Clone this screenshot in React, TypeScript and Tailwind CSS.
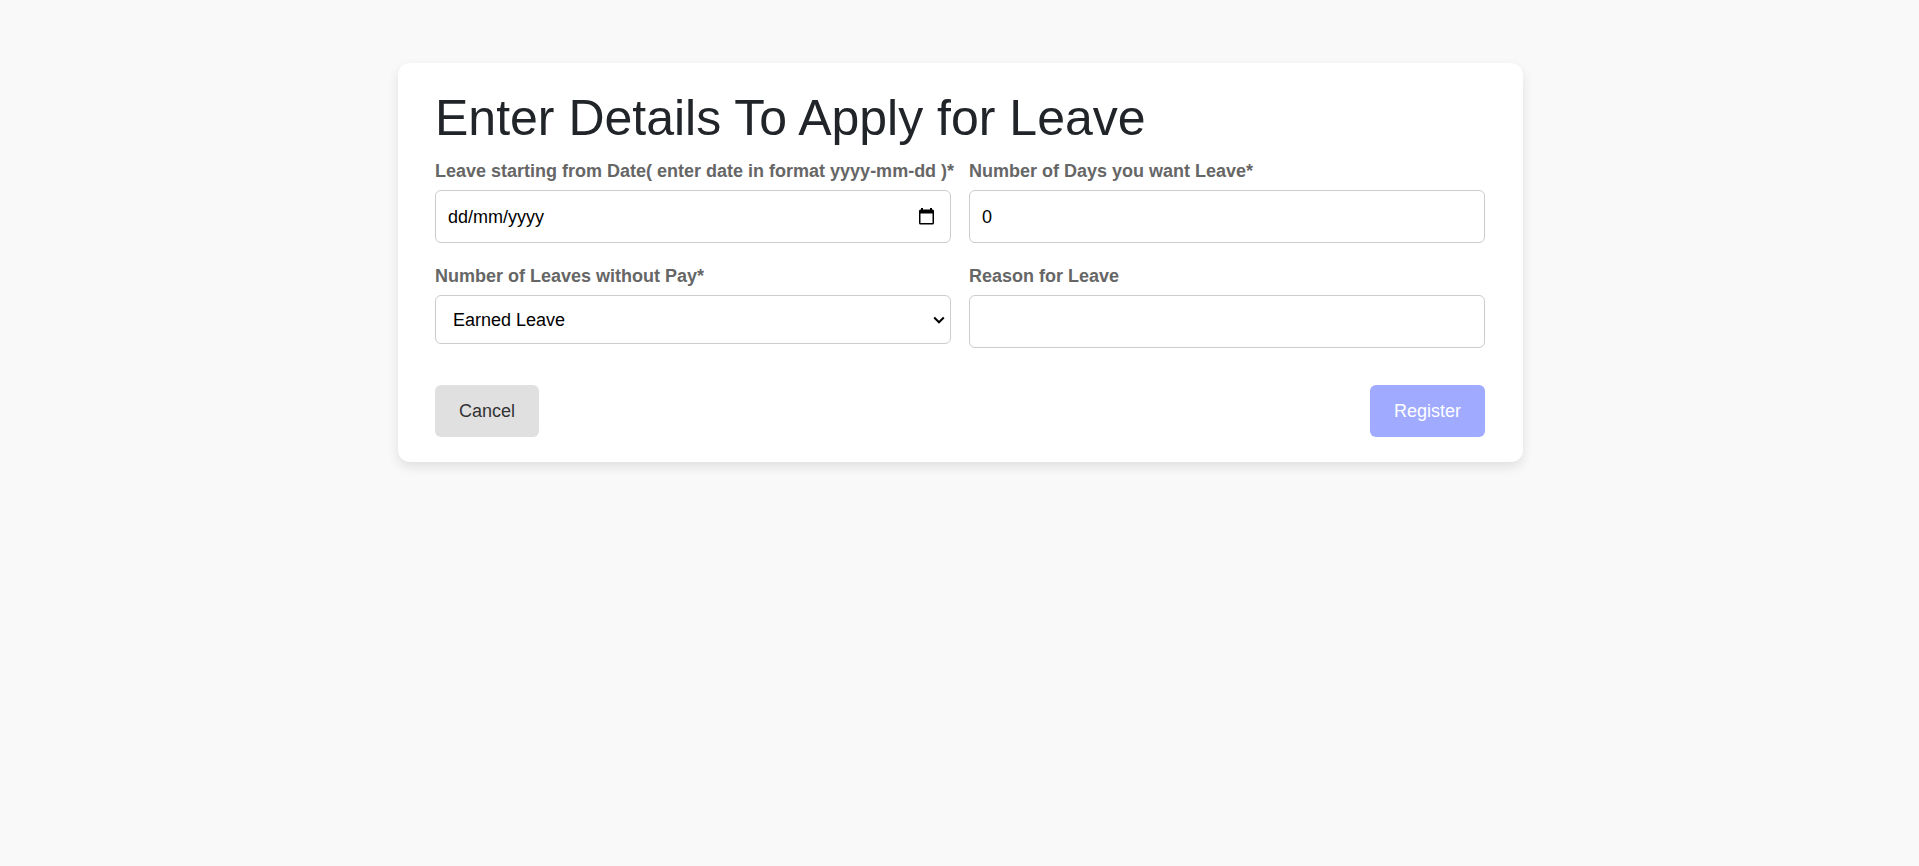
import { useState } from "react";
import type { ReactNode } from "react";

const control =
  "block w-full rounded-md border border-[#cccccc] bg-white text-lg leading-5 text-black outline-none focus:border-[#6b7cff]";

function Field({ id, label, children }: { id: string; label: string; children: ReactNode }) {
  return (
    <div className="flex min-w-0 flex-col gap-[5px]">
      <label
        htmlFor={id}
        className="text-lg font-bold leading-[27px] text-[#666666] lg:whitespace-nowrap"
      >
        {label}
      </label>
      {children}
    </div>
  );
}

function CalendarIcon() {
  return (
    <svg viewBox="0 0 15 17" className="h-[17px] w-[15px]" aria-hidden="true">
      <path
        fillRule="evenodd"
        fill="#000"
        d="M2 0h2v1.500h7V0h2v1.500h.5A1.500 1.500 0 0 1 15 3v12a1.500 1.500 0 0 1-1.500 1.500h-12A1.500 1.500 0 0 1 0 15V3a1.500 1.500 0 0 1 1.500-1.500H2zM1.500 5.500V15h12V5.500z"
      />
    </svg>
  );
}

export default function App() {
  const [date, setDate] = useState("");
  const [days, setDays] = useState("0");
  const [reason, setReason] = useState("");

  return (
    <main className="min-h-screen bg-[#f9f9f9] pl-[18px] pr-4 pt-[63px] font-['Liberation_Sans',Arial,sans-serif]">
      <form
        className="mx-auto max-w-[1125px] rounded-xl bg-white py-[25px] pl-[37px] pr-[38px] shadow-[0_5px_12px_rgba(0,0,0,0.1)]"
        onSubmit={(e) => e.preventDefault()}
      >
        <h1 className="mb-[10px] text-[50px] leading-[60px] text-[#212529]">
          Enter Details To Apply for Leave
        </h1>

        <div className="grid grid-cols-1 items-start gap-x-[18px] gap-y-5 md:grid-cols-2">
          <Field id="start" label="Leave starting from Date( enter date in format yyyy-mm-dd )*">
            <div className="relative">
              <input
                id="start"
                type="text"
                placeholder="dd/mm/yyyy"
                value={date}
                onChange={(e) => setDate(e.target.value)}
                className={`${control} h-[53px] pl-3 pr-10 pt-0.5 placeholder:text-black`}
              />
              <button
                type="button"
                aria-label="Open calendar"
                className="absolute inset-y-0 right-[17px] flex items-center"
              >
                <CalendarIcon />
              </button>
            </div>
          </Field>

          <Field id="days" label="Number of Days you want Leave*">
            <input
              id="days"
              type="text"
              inputMode="numeric"
              value={days}
              onChange={(e) => setDays(e.target.value)}
              className={`${control} h-[53px] px-3 pt-0.5`}
            />
          </Field>

          <Field id="type" label="Number of Leaves without Pay*">
            <div className="relative">
              <select id="type" className={`${control} h-[49px] appearance-none pl-[17px] pr-8`}>
                <option>Earned Leave</option>
              </select>
              <svg
                viewBox="0 0 12 8"
                className="pointer-events-none absolute inset-y-0 right-[6px] my-auto h-2 w-3"
                fill="none"
                stroke="#000"
                strokeWidth="2"
                aria-hidden="true"
              >
                <path d="M1.200 1.500 6 6.300 10.800 1.500" />
              </svg>
            </div>
          </Field>

          <Field id="reason" label="Reason for Leave">
            <input
              id="reason"
              type="text"
              value={reason}
              onChange={(e) => setReason(e.target.value)}
              className={`${control} h-[53px] px-3 pt-0.5`}
            />
          </Field>
        </div>

        <div className="mt-[37px] flex justify-between">
          <button
            type="button"
            className="rounded-md bg-[#e0e0e0] px-6 py-4 text-lg leading-5 text-[#333333]"
          >
            Cancel
          </button>
          <button
            type="submit"
            className="rounded-md bg-[#a0aaff] px-6 py-4 text-lg leading-5 text-white"
          >
            Register
          </button>
        </div>
      </form>
    </main>
  );
}
